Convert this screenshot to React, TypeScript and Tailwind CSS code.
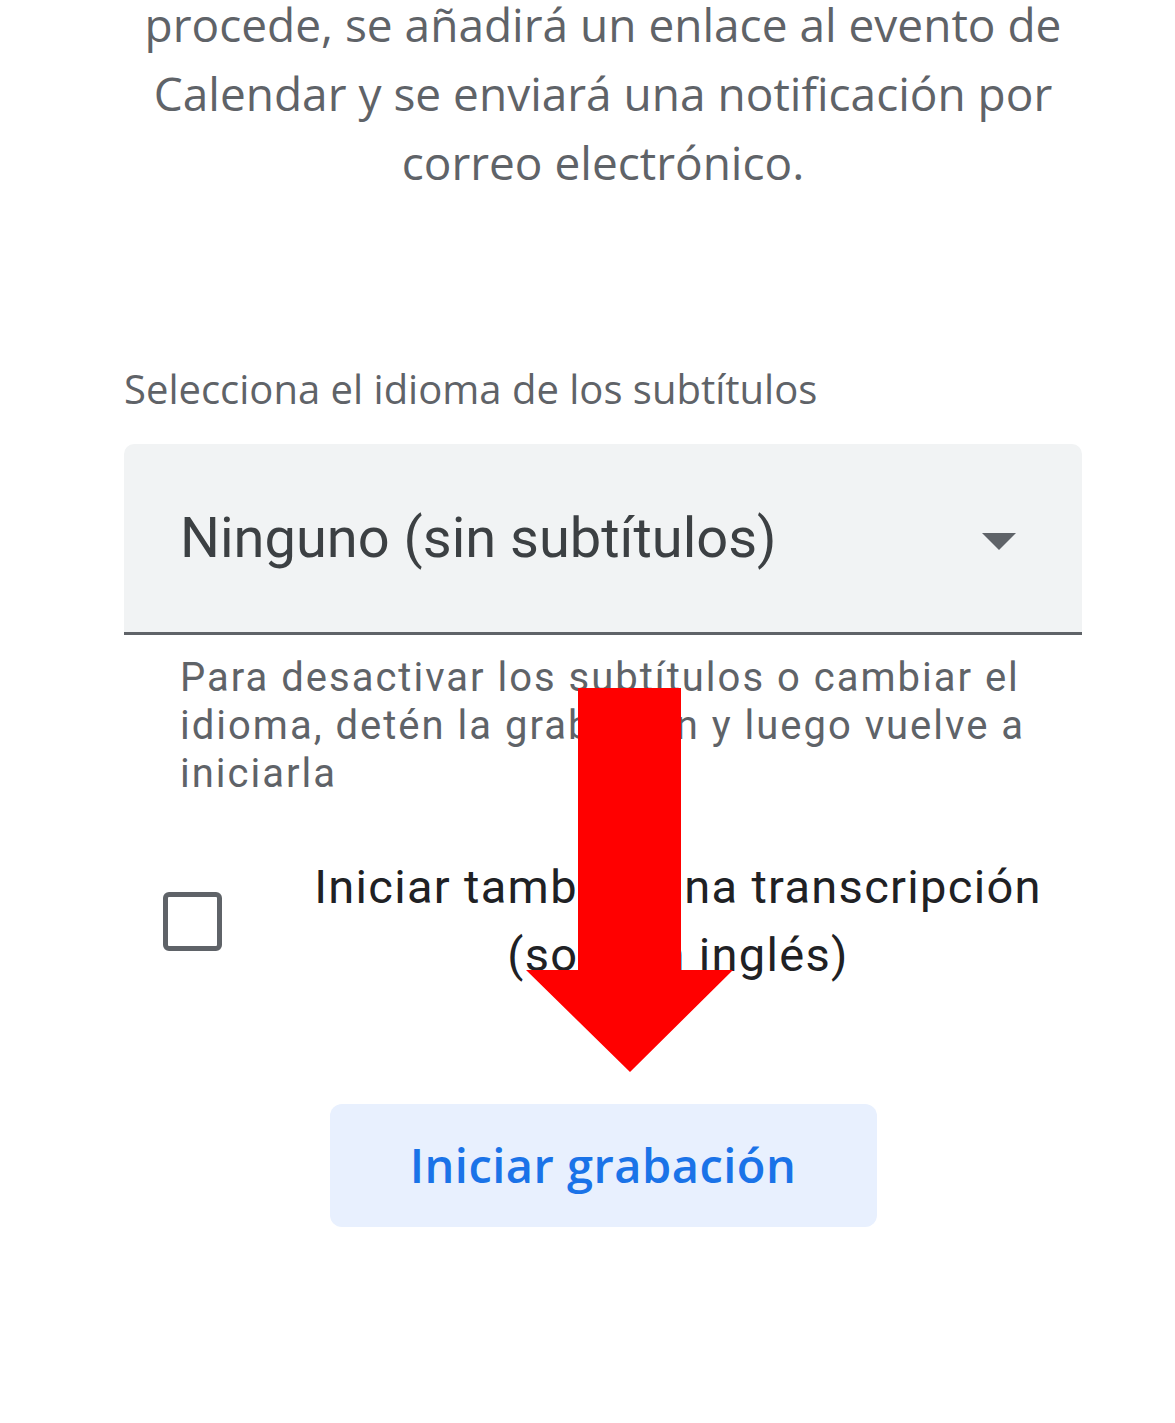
import React from 'react'

// Red callout arrow pasted on top of the dialog, pointing at the record button.
function RedArrow() {
  return (
    <svg
      className="pointer-events-none absolute left-[526px] top-[688px]"
      width="207"
      height="384"
      viewBox="0 0 207 384"
    >
      <polygon points="52,0 155,0 155,282 207,282 104,384 0,282 52,282" fill="#ff0000" />
    </svg>
  )
}

function Caret() {
  return (
    <svg className="mt-[8px]" width="34" height="18" viewBox="0 0 34 18">
      <polygon points="0,0 34,0 17,17" fill="#5f6368" />
    </svg>
  )
}

export default function App() {
  return (
    <div className="relative h-[1423px] w-[1175px] overflow-hidden bg-white">
      <div className="ml-[124px] flex w-[958px] flex-col">
        {/* Intro text, cut off at the top of the screenshot */}
        <p className="mt-[-10px] text-center font-['Open_Sans',sans-serif] text-[46px] leading-[69px] text-[#5f6368]">
          procede, se añadirá un enlace al evento de
          <br />
          Calendar y se enviará una notificación por
          <br />
          correo electrónico.
        </p>

        <label className="mt-[170px] font-['Open_Sans',sans-serif] text-[40px] leading-[44px] text-[#5f6368]">
          Selecciona el idioma de los subtítulos
        </label>

        {/* Filled select */}
        <div className="mt-[33px] flex h-[191px] items-center justify-between rounded-t-[10px] border-b-[3px] border-[#5f6368] bg-[#f1f3f4] pl-[56px] pr-[66px]">
          <span className="font-['Roboto',sans-serif] text-[56px] text-[#3c4043]">
            Ninguno (sin subtítulos)
          </span>
          <Caret />
        </div>

        <p className="mt-[19px] pl-[56px] pr-[20px] font-['Roboto',sans-serif] text-[40px] leading-[48px] tracking-[0.05em] text-[#5f6368]">
          Para desactivar los subtítulos o cambiar el
          <br />
          idioma, detén la grabación y luego vuelve a
          <br />
          iniciarla
        </p>

        {/* Transcript checkbox */}
        <div className="mt-[55px] flex items-center">
          <div className="ml-[39px] h-[59px] w-[59px] shrink-0 rounded-[6px] border-[5px] border-[#5f6368]" />
          <p className="ml-[52px] flex-1 text-center font-['Roboto',sans-serif] text-[47px] leading-[68px] tracking-[0.028em] text-[#202124]">
            Iniciar también una transcripción
            <br />
            (solo en inglés)
          </p>
        </div>

        <button
          type="button"
          className="mx-auto mt-[115px] h-[123px] w-[547px] rounded-[12px] bg-[#e8f0fe] font-['Open_Sans',sans-serif] text-[47px] font-semibold tracking-[0.01em] text-[#1a73e8]"
        >
          Iniciar grabación
        </button>
      </div>

      <RedArrow />
    </div>
  )
}
